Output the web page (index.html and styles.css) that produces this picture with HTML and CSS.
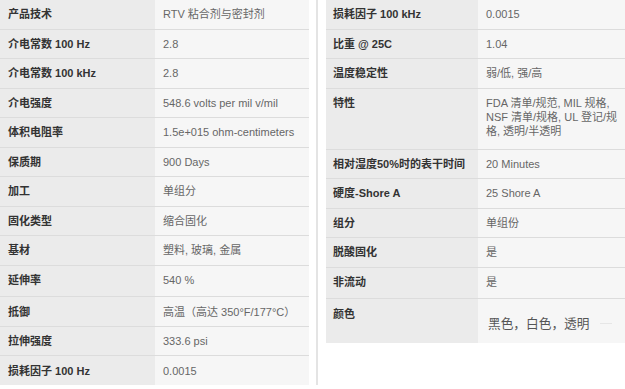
FILE: index.html
```html
<!DOCTYPE html>
<html lang="zh-CN">
<head>
<meta charset="utf-8">
<title>产品规格</title>
<link rel="stylesheet" href="styles.css">
</head>
<body>
<div class="specs">
  <div class="col col-left">
    <div class="spec spec-left">
      <div class="row"><div class="k">产品技术</div><div class="v">RTV 粘合剂与密封剂</div></div>
      <div class="row"><div class="k">介电常数 100 Hz</div><div class="v">2.8</div></div>
      <div class="row"><div class="k">介电常数 100 kHz</div><div class="v">2.8</div></div>
      <div class="row"><div class="k">介电强度</div><div class="v">548.6 volts per mil v/mil</div></div>
      <div class="row"><div class="k">体积电阻率</div><div class="v">1.5e+015 ohm-centimeters</div></div>
      <div class="row"><div class="k">保质期</div><div class="v">900 Days</div></div>
      <div class="row"><div class="k">加工</div><div class="v">单组分</div></div>
      <div class="row"><div class="k">固化类型</div><div class="v">缩合固化</div></div>
      <div class="row"><div class="k">基材</div><div class="v">塑料, 玻璃, 金属</div></div>
      <div class="row row-tall"><div class="k">延伸率</div><div class="v">540 %</div></div>
      <div class="row"><div class="k">抵御</div><div class="v">高温（高达 350°F/177°C）</div></div>
      <div class="row"><div class="k">拉伸强度</div><div class="v">333.6 psi</div></div>
      <div class="row row-last"><div class="k">损耗因子 100 Hz</div><div class="v">0.0015</div></div>
    </div>
  </div>
  <div class="col col-right">
    <div class="spec spec-right">
      <div class="row"><div class="k">损耗因子 100 kHz</div><div class="v">0.0015</div></div>
      <div class="row"><div class="k">比重 @ 25C</div><div class="v">1.04</div></div>
      <div class="row"><div class="k">温度稳定性</div><div class="v">弱/低, 强/高</div></div>
      <div class="row row-multi"><div class="k">特性</div><div class="v">FDA 清单/规范, MIL 规格, NSF 清单/规格, UL 登记/规格, 透明/半透明</div></div>
      <div class="row"><div class="k">相对湿度50%时的表干时间</div><div class="v">20 Minutes</div></div>
      <div class="row"><div class="k">硬度-Shore A</div><div class="v">25 Shore A</div></div>
      <div class="row"><div class="k">组分</div><div class="v">单组份</div></div>
      <div class="row"><div class="k">脱酸固化</div><div class="v">是</div></div>
      <div class="row row-tall"><div class="k">非流动</div><div class="v">是</div></div>
      <div class="row row-last row-color"><div class="k">颜色</div><div class="v"><span class="color-text">黑色，白色，透明</span><span class="trail"></span></div></div>
    </div>
  </div>
</div>
</body>
</html>
```
FILE: styles.css
```css
html, body {
  margin: 0;
  padding: 0;
  background: #ffffff;
}

body {
  font-family: "Liberation Sans", Arial, "Noto Sans CJK SC", sans-serif;
  font-size: 11px;
  color: #666666;
}

.specs {
  display: flex;
  align-items: flex-start;
  gap: 8px;
  width: 625px;
}

.col-left {
  width: 309px;
  padding-right: 7px;
  border-right: 2px solid #e4e4e4;
}

.col-right {
  width: 299px;
}

.spec {
  display: flex;
  flex-direction: column;
}

.row {
  display: grid;
  grid-template-columns: 155px 1fr;
}

.spec-right .row {
  grid-template-columns: 152px 1fr;
}

.k, .v {
  padding: 7.25px 8px;
  line-height: 14px;
  border-bottom: 1px solid #dcdcdc;
}

.spec-right .k {
  padding-left: 7px;
}

.k {
  background: #ebebeb;
  color: #333333;
  font-weight: bold;
  white-space: nowrap;
}

.v {
  background: #f6f6f6;
  color: #666666;
}

.row-last .k, .row-last .v {
  border-bottom: none;
}

.row-tall .k, .row-tall .v {
  padding-bottom: 9.5px;
}

.row-multi .v {
  padding-bottom: 10.75px;
  padding-right: 5px;
}

.row-color .v {
  padding-top: 16px;
  padding-bottom: 12px;
  line-height: 16px;
  display: flex;
  align-items: center;
  gap: 10px;
}

.color-text {
  font-family: "Noto Sans CJK SC", sans-serif;
  font-size: 12.7px;
  color: #555555;
  padding-left: 2px;
}

.trail {
  width: 12px;
  height: 1px;
  background: #e6e6e6;
}
```
